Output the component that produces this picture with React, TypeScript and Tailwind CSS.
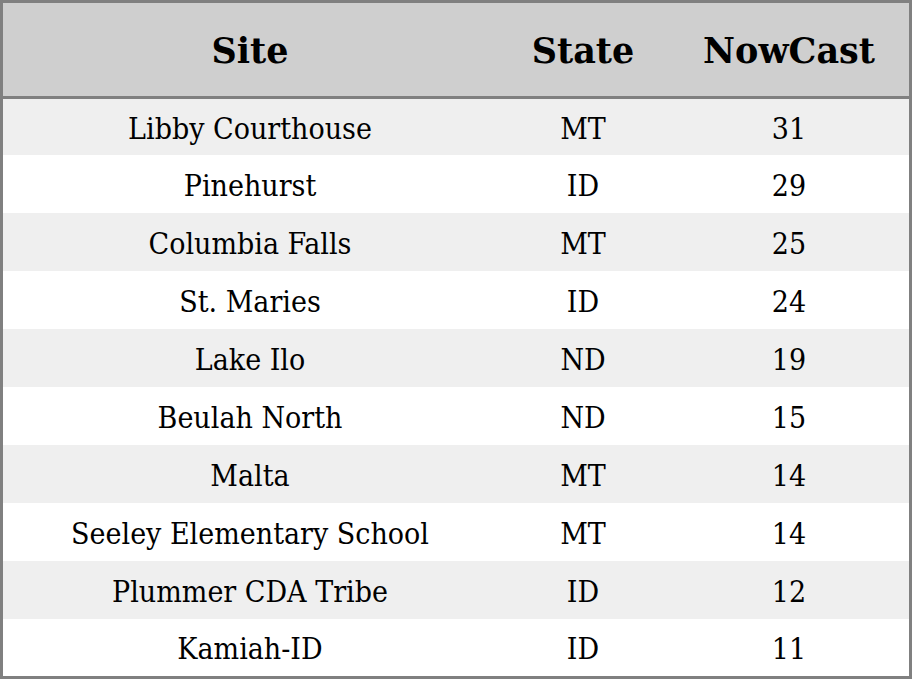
const rows: [string, string, number][] = [
  ["Libby Courthouse", "MT", 31],
  ["Pinehurst", "ID", 29],
  ["Columbia Falls", "MT", 25],
  ["St. Maries", "ID", 24],
  ["Lake Ilo", "ND", 19],
  ["Beulah North", "ND", 15],
  ["Malta", "MT", 14],
  ["Seeley Elementary School", "MT", 14],
  ["Plummer CDA Tribe", "ID", 12],
  ["Kamiah-ID", "ID", 11],
];

export default function App() {
  return (
    <div className="h-[679px] w-[912px] bg-white font-['DejaVu_Serif',serif] text-black">
      <div className="flex h-full flex-col border-[3px] border-[#808080]">
        <div className="grid h-[96px] shrink-0 grid-cols-[494px_172px_1fr] items-center border-b-[3px] border-[#808080] bg-[#cfcfcf] pt-[3px] text-center text-[35px] font-bold">
          <div>Site</div>
          <div>State</div>
          <div>NowCast</div>
        </div>
        {rows.map(([site, state, val], i) => (
          <div
            key={site}
            className={
              "grid grid-cols-[494px_172px_1fr] items-center pt-[2px] text-center font-['DejaVu_Serif_Condensed','DejaVu_Serif',serif] text-[30px] " +
              (i === 0 ? "h-[56px] " : i === rows.length - 1 ? "h-[57px] " : "h-[58px] ") +
              (i % 2 === 0 ? "bg-[#efefef]" : "bg-white")
            }
          >
            <div>{site}</div>
            <div>{state}</div>
            <div>{val}</div>
          </div>
        ))}
      </div>
    </div>
  );
}
